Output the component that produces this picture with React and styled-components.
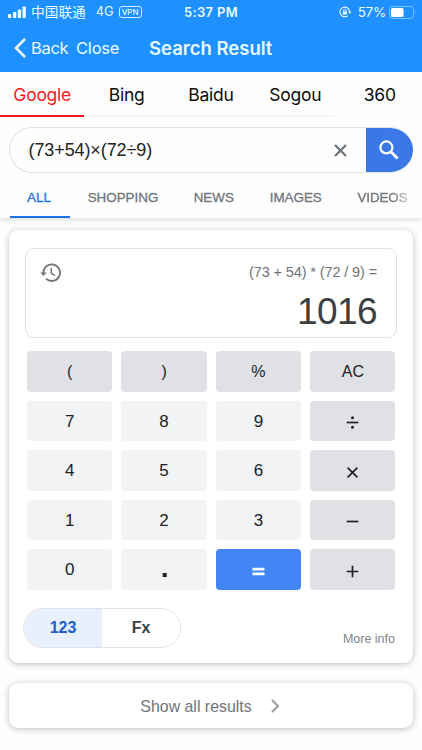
import React from "react";
import styled, { createGlobalStyle } from "styled-components";

const ui = `Inter, "Noto Sans CJK SC", sans-serif`;
const web = `"Liberation Sans", Arial, sans-serif`;

const Global = createGlobalStyle`
  * { box-sizing: border-box; }
  body { margin: 0; background: #fff; overflow: hidden; }
  button { border: 0; padding: 0; margin: 0; background: none; font: inherit; color: inherit; }
  svg { display: block; flex: none; }
`;

const Screen = styled.div`
  width: 422px;
  height: 750px;
  overflow: hidden;
  background: #fefefe;
  font-family: ${web};
  white-space: nowrap;
`;

const Header = styled.header`
  height: 72px;
  background: #1e90ff;
  color: #e9fbff;
  font-family: ${ui};
`;

const StatusBar = styled.div`
  display: grid;
  grid-template-columns: 1fr auto 1fr;
  align-items: center;
  height: 24px;
  padding: 0 5px 0 8px;
  font-size: 13px;
  line-height: 24px;
`;

const StatusGroup = styled.div`
  display: flex;
  align-items: center;
  justify-content: ${(p) => (p.$end ? "flex-end" : "flex-start")};
`;

const Carrier = styled.span`
  margin-left: 5px;
  font: 400 13.7px/22px "Noto Sans CJK SC", sans-serif;
  padding-bottom: 2px;
`;

const Network = styled.span`
  margin-left: 10px;
  font-size: 12.8px;
`;

const Vpn = styled.span`
  margin-left: 5px;
  width: 23px;
  height: 12px;
  border: 1px solid #d5f0ff;
  border-radius: 3px;
  font-size: 8px;
  line-height: 10px;
  font-weight: 500;
  text-align: center;
`;

const Clock = styled.span`
  padding-right: 3px;
  font-size: 13px;
  font-weight: 600;
  letter-spacing: 0.35px;
`;

const Percent = styled.span`
  margin: 0 3px 0 6px;
  font-size: 13.5px;
  letter-spacing: -0.25px;
`;

const NavBar = styled.nav`
  display: flex;
  align-items: center;
  height: 48px;
  padding-left: 14px;
`;

const NavLink = styled.button`
  display: flex;
  align-items: center;
  gap: 5px;
  width: ${(p) => p.$width}px;
  font-size: 16.5px;
  letter-spacing: ${(p) => p.$spacing}px;
`;

const Title = styled.h1`
  margin: 0;
  font-size: 18.5px;
  font-weight: 600;
  letter-spacing: 0;
`;

const Engines = styled.div`
  display: grid;
  grid-template-columns: repeat(5, 1fr);
  height: 45px;
  background: linear-gradient(#f3f3f8, #f3f3f8) 0 100% / 335px 2px no-repeat;
  font-family: ${ui};
`;

const Engine = styled.button`
  height: 45px;
  padding-top: 1px;
  border-bottom: 2px solid ${(p) => (p.$active ? "#f01818" : "transparent")};
  color: ${(p) => (p.$active ? "#f01c1c" : "#0c0c0c")};
  font-size: 17.5px;
  letter-spacing: -0.25px;
`;

const SearchBar = styled.div`
  display: flex;
  width: 404px;
  height: 46px;
  margin: 10px 0 0 9px;
  border: 1px solid #dfe1e5;
  border-right: 0;
  border-radius: 23px;
  overflow: hidden;
`;

const Query = styled.div`
  flex: 1;
  padding-left: 18.5px;
  color: #222;
  font-size: 18px;
  letter-spacing: -0.1px;
  line-height: 45px;
`;

const Clear = styled.button`
  display: grid;
  place-items: center;
  width: 50px;
  padding-right: 1px;
  color: #70757a;
`;

const SearchButton = styled.button`
  display: grid;
  place-items: center;
  width: 47px;
  height: 46px;
  margin-top: -1px;
  padding-right: 1.5px;
  background: #3b78e7;
  color: #fff;
`;

const Filters = styled.div`
  display: flex;
  height: 45px;
  padding-left: 10px;
  box-shadow: 0 2px 5px rgba(60, 64, 67, 0.17);
  clip-path: inset(0 0 -10px 0);
`;

const Filter = styled.button`
  flex: none;
  width: ${(p) => p.$width}px;
  height: 45px;
  padding-top: ${(p) => (p.$active ? 6 : 4)}px;
  padding-right: ${(p) => (p.$active ? 2 : 0)}px;
  border-bottom: ${(p) => (p.$active ? "2.5px solid #1a73e8" : "0")};
  color: ${(p) => (p.$active ? "#1a73e8" : "#70757a")};
  font-size: 13.4px;
  letter-spacing: ${(p) => (p.$fade ? -0.1 : 0)}px;
  -webkit-text-stroke: 0.3px currentColor;
  text-align: center;
  ${(p) => p.$fade && `mask-image: linear-gradient(90deg, #000 60%, rgba(0,0,0,.3) 82%);`}
`;

const Card = styled.section`
  width: 404px;
  margin: 12px 0 0 9px;
  height: 433px;
  padding: 18px 17px 0;
  border-radius: 9px;
  background: #fff;
  box-shadow: 0 1px 6px rgba(32, 33, 36, 0.3);
`;

const Display = styled.div`
  display: flex;
  justify-content: space-between;
  height: 90px;
  margin: 0 -1px;
  padding: 13px 19px 0 13px;
  border: 1px solid #dfe1e4;
  border-radius: 9px;
  color: #70757a;
`;

const Readout = styled.div`
  text-align: right;
`;

const Expression = styled.div`
  font-size: 14.5px;
  letter-spacing: -0.12px;
  line-height: 20px;
`;

const Result = styled.div`
  margin-top: 9px;
  color: #3c4043;
  font-size: 37px;
  line-height: 42px;
  letter-spacing: -0.6px;
`;

const Keypad = styled.div`
  display: grid;
  grid-template-columns: repeat(4, 85.3px);
  grid-auto-rows: 40.4px;
  gap: 9.1px;
  margin: 13.4px 0 0 1px;
`;

const tones = {
  digit: ["#f1f3f4", "#202124"],
  op: ["#dfe1e5", "#202124"],
  equals: ["#4285f4", "#fff"],
};

const Key = styled.button`
  display: flex;
  align-items: center;
  justify-content: center;
  border-radius: 4px;
  padding-top: 1px;
  background: ${(p) => tones[p.$tone][0]};
  color: ${(p) => tones[p.$tone][1]};
  font-size: ${(p) => (p.$tone === "digit" ? 17 : 16)}px;
`;

const CardFooter = styled.div`
  display: flex;
  justify-content: space-between;
  margin: 18px 1px 0 -3px;
`;

const Toggle = styled.div`
  display: flex;
  width: 158px;
  height: 40px;
  border: 1px solid #dfe1e5;
  border-radius: 21px;
  overflow: hidden;
`;

const Mode = styled.button`
  flex: 1;
  height: 40px;
  margin-top: -1px;
  padding-top: 1px;
  background: ${(p) => (p.$active ? "#e8f0fe" : "#fff")};
  color: ${(p) => (p.$active ? "#1b5dcb" : "#3c4043")};
  font-weight: bold;
  font-size: 16px;
`;

const MoreInfo = styled.a`
  padding-top: 23.5px;
  color: #808387;
  font-size: 12.5px;
  line-height: 16px;
`;

const ShowAll = styled.button`
  display: flex;
  align-items: center;
  justify-content: center;
  gap: 19px;
  width: 404px;
  height: 45px;
  margin: 20px 0 0 9px;
  padding: 3px 2px 0 0;
  border-radius: 9px;
  background: #fff;
  box-shadow: 0 1px 6px rgba(32, 33, 36, 0.3);
  color: #70757a;
  font-size: 15.9px;
`;

const Chevron = styled.svg`
  margin-top: -3px;
`;

const glyphs = {
  divide: (
    <>
      <path d="M1.7 7.5H13.3" />
      <circle cx="7.5" cy="2.8" r="1.5" fill="currentColor" stroke="none" />
      <circle cx="7.5" cy="12.2" r="1.5" fill="currentColor" stroke="none" />
    </>
  ),
  times: <path d="M2.6 2.6L12.4 12.4M12.4 2.6L2.6 12.4" />,
  minus: <path d="M1.7 7.5H13.3" />,
  plus: <path d="M1.7 7.5H13.3M7.5 1.7V13.3" />,
  equals: <path d="M1.5 5.2H13.5M1.5 9.9H13.5" strokeWidth="2.8" />,
  dot: <rect x="5.7" y="9" width="4" height="4" fill="currentColor" stroke="none" />,
};

const KeyGlyph = styled.svg.attrs({ width: 15, height: 15, viewBox: "0 0 15 15", fill: "none", stroke: "currentColor", strokeWidth: 1.7 })`
  margin-top: 2px;
`;

const keys = [
  ["(", "op"], [")", "op"], ["%", "op"], ["AC", "op"],
  ["7", "digit"], ["8", "digit"], ["9", "digit"], ["divide", "op"],
  ["4", "digit"], ["5", "digit"], ["6", "digit"], ["times", "op"],
  ["1", "digit"], ["2", "digit"], ["3", "digit"], ["minus", "op"],
  ["0", "digit"], ["dot", "digit"], ["equals", "equals"], ["plus", "op"],
];

const engines = ["Google", "Bing", "Baidu", "Sogou", "360"];
const filters = [["ALL", 60], ["SHOPPING", 106], ["NEWS", 75.5], ["IMAGES", 88.5], ["VIDEOS", 85]];

const Signal = () => (
  <svg width="18" height="12" viewBox="0 0 18 12" fill="#f4fdff">
    <rect x="0" y="8" width="3.3" height="4" rx="0.8" />
    <rect x="5" y="6" width="3.3" height="6" rx="0.8" />
    <rect x="9.8" y="3.4" width="3.3" height="8.6" rx="0.8" />
    <rect x="14.5" y="0.5" width="3.3" height="11.5" rx="0.8" />
  </svg>
);

const RotationLock = () => (
  <svg width="13" height="12" viewBox="0 0 13 12" fill="none" stroke="#e9fbff" strokeWidth="1.1">
    <path d="M10.6 6A4.8 4.8 0 1 0 8.7 9.8M10.6 6A4.8 4.8 0 0 0 8.7 2.1" />
    <path d="M8.9 5.6H12.4L10.6 8Z" fill="#e9fbff" stroke="none" />
    <rect x="3.8" y="5.4" width="4" height="3.1" fill="#e9fbff" stroke="none" />
    <path d="M4.6 5.6V4.4a1.2 1.2 0 0 1 2.4 0V5.6" strokeWidth="0.9" />
  </svg>
);

const Battery = () => (
  <svg width="28" height="13" viewBox="0 0 28 13">
    <rect x="0.5" y="0.5" width="24" height="12" rx="3" fill="none" stroke="#79beff" />
    <rect x="2" y="2" width="12.5" height="9" rx="1.5" fill="#fff" />
    <path d="M26 4.3q1.5 2.2 0 4.4z" fill="#79beff" />
  </svg>
);

const HistoryIcon = () => (
  <svg width="22" height="21" viewBox="0 0 22 21" fill="none" stroke="currentColor" strokeWidth="1.8">
    <path d="M4.4 11.8V10.6A8.3 8.3 0 1 1 7 16.7" />
    <path d="M1.2 10.4H7.8L4.4 14.1Z" fill="currentColor" stroke="none" />
    <path d="M12.3 6V11.2L16 13.6" strokeWidth="1.5" />
  </svg>
);

export default function App() {
  return (
    <Screen>
      <Global />
      <Header>
        <StatusBar>
          <StatusGroup>
            <Signal />
            <Carrier>中国联通</Carrier>
            <Network>4G</Network>
            <Vpn>VPN</Vpn>
          </StatusGroup>
          <Clock>5:37 PM</Clock>
          <StatusGroup $end>
            <RotationLock />
            <Percent>57%</Percent>
            <Battery />
          </StatusGroup>
        </StatusBar>
        <NavBar>
          <NavLink $width={62} $spacing={-0.3}>
            <svg width="12" height="20" viewBox="0 0 12 20" fill="none" stroke="currentColor" strokeWidth="2.6">
              <path d="M11 1L2 10L11 19" />
            </svg>
            Back
          </NavLink>
          <NavLink $width={73} $spacing={-0.2}>Close</NavLink>
          <Title>Search Result</Title>
        </NavBar>
      </Header>
      <Engines>
        {engines.map((name, i) => (
          <Engine key={name} $active={i === 0}>{name}</Engine>
        ))}
      </Engines>
      <SearchBar>
        <Query>(73+54)×(72÷9)</Query>
        <Clear>
          <svg width="13" height="13" viewBox="0 0 13 13" stroke="currentColor" strokeWidth="2.3">
            <path d="M1 1L12 12M12 1L1 12" />
          </svg>
        </Clear>
        <SearchButton>
          <svg width="20" height="20" viewBox="0 0 20 20" fill="none" stroke="currentColor" strokeWidth="2.2">
            <circle cx="7.4" cy="7.4" r="6" />
            <path d="M11.8 11.8L18.6 18.6" strokeWidth="2.8" />
          </svg>
        </SearchButton>
      </SearchBar>
      <Filters>
        {filters.map(([name, width], i) => (
          <Filter key={name} $width={width} $active={i === 0} $fade={i === 4}>{name}</Filter>
        ))}
      </Filters>
      <Card>
        <Display>
          <HistoryIcon />
          <Readout>
            <Expression>(73 + 54) * (72 / 9) =</Expression>
            <Result>1016</Result>
          </Readout>
        </Display>
        <Keypad>
          {keys.map(([label, tone]) => (
            <Key key={label} $tone={tone}>
              {glyphs[label] ? <KeyGlyph>{glyphs[label]}</KeyGlyph> : label}
            </Key>
          ))}
        </Keypad>
        <CardFooter>
          <Toggle>
            <Mode $active>123</Mode>
            <Mode>Fx</Mode>
          </Toggle>
          <MoreInfo>More info</MoreInfo>
        </CardFooter>
      </Card>
      <ShowAll>
        Show all results
        <Chevron width="9" height="14" viewBox="0 0 9 14" fill="none" stroke="#a0a2a5" strokeWidth="2.2">
          <path d="M1 1L7 7L1 13" />
        </Chevron>
      </ShowAll>
    </Screen>
  );
}
